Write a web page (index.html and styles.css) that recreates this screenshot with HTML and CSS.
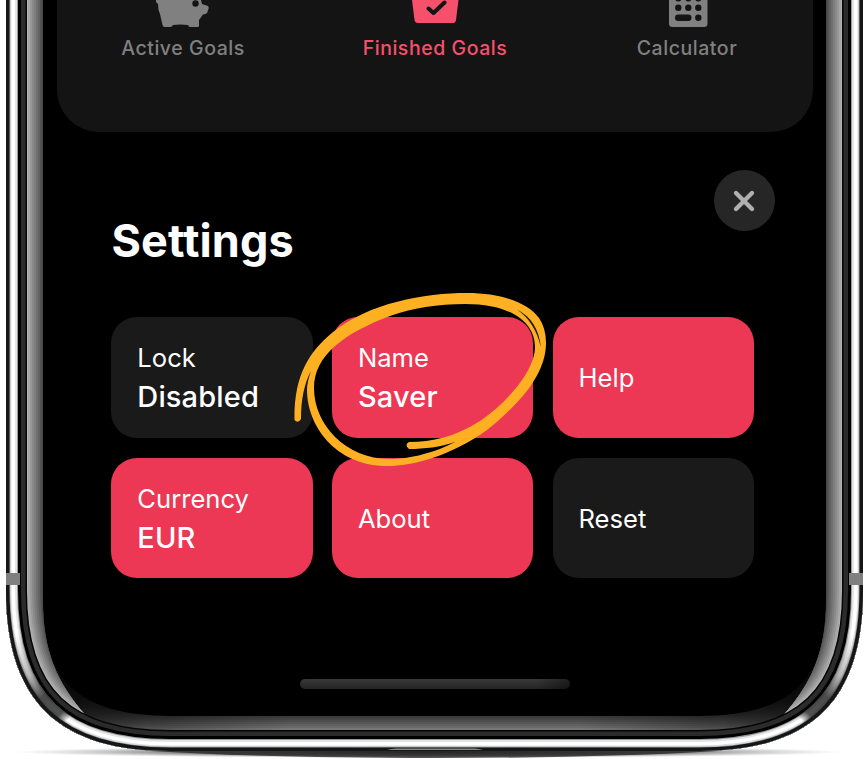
FILE: index.html
```html
<!DOCTYPE html>
<html lang="en">
<head>
<meta charset="utf-8">
<title>Settings</title>
<link rel="stylesheet" href="styles.css">
</head>
<body>
<div class="stage">
  <svg class="frame" width="868" height="759" viewBox="0 0 868 759" aria-hidden="true">
    <defs>
      <path id="body" d="M6-80V590C6 704 62 751 170 751H699C807 751 863 704 863 590V-80Z"/>
      <clipPath id="bodyClip"><use href="#body"/></clipPath>
      <clipPath id="sides"><path d="M0-80H43V600C43 650 56 682 87 717L60 759H0ZM869-80H826V600C826 650 813 682 782 717L809 759H869Z"/></clipPath>
      <linearGradient id="fade" gradientUnits="userSpaceOnUse" x1="75" x2="794" y1="0" y2="0">
        <stop offset="0" stop-opacity=".85"/><stop offset=".1" stop-opacity=".35"/><stop offset=".3" stop-opacity="0"/><stop offset=".7" stop-opacity="0"/><stop offset=".9" stop-opacity=".35"/><stop offset="1" stop-opacity=".85"/>
      </linearGradient>
      <linearGradient id="shadeL" gradientUnits="userSpaceOnUse" x1="0" y1="650" x2="69" y2="719">
        <stop offset="0" stop-color="#222" stop-opacity="0"/><stop offset=".4" stop-color="#333" stop-opacity=".35"/><stop offset=".65" stop-color="#2c2c2c" stop-opacity=".85"/><stop offset=".9" stop-color="#333" stop-opacity=".85"/><stop offset=".96" stop-color="#333" stop-opacity=".4"/><stop offset="1.0" stop-color="#333" stop-opacity="0"/>
      </linearGradient>
      <radialGradient id="shadow"><stop offset="0" stop-color="#333"/><stop offset=".6" stop-color="#555" stop-opacity=".75"/><stop offset="1" stop-color="#999" stop-opacity="0"/></radialGradient>
      <g id="corner"><path d="M6 590C6 704 62 751 170 751" fill="none" stroke="url(#shadeL)" stroke-width="24"/></g>
    </defs>
    <ellipse cx="429" cy="752" rx="415" ry="6" fill="url(#shadow)"/>
    <g clip-path="url(#bodyClip)" fill="none">
      <use href="#body" fill="#000"/>
      <g>
        <use href="#body" stroke="#3b3b3b" stroke-width="70"/>
        <use href="#body" stroke="#444" stroke-width="66"/>
        <use href="#body" stroke="#4d4d4d" stroke-width="62"/>
        <use href="#body" stroke="#565656" stroke-width="58"/>
        <use href="#body" stroke="#606060" stroke-width="54"/>
        <use href="#body" stroke="#6a6a6a" stroke-width="50"/>
        <use href="#body" stroke="#777" stroke-width="46"/>
        <rect x="30" y="560" width="809" height="175" fill="url(#fade)"/>
      </g>
      <g clip-path="url(#sides)">
        <rect y="-80" width="869" height="839" fill="#424242"/>
        <use href="#body" stroke="#484848" stroke-width="74"/>
        <use href="#body" stroke="#555" stroke-width="71"/>
        <use href="#body" stroke="#626262" stroke-width="68"/>
        <use href="#body" stroke="#707070" stroke-width="64"/>
        <use href="#body" stroke="#7d7d7d" stroke-width="60"/>
        <use href="#body" stroke="#8a8a8a" stroke-width="56"/>
        <use href="#body" stroke="#989898" stroke-width="52"/>
        <use href="#body" stroke="#a6a6a6" stroke-width="48"/>
        <use href="#body" stroke="#b4b4b4" stroke-width="44"/>
      </g>
      <use href="#body" stroke="#050505" stroke-width="42"/>
      <use href="#body" stroke="#2b2b2b" stroke-width="39"/>
      <use href="#body" stroke="#000" stroke-width="30"/>
      <use href="#body" stroke="#999" stroke-width="24"/>
      <use href="#body" stroke="#e4e4e4" stroke-width="22"/>
      <use href="#body" stroke="#fff" stroke-width="18"/>
      <use href="#body" stroke="#ddd" stroke-width="11"/>
      <use href="#body" stroke="#999" stroke-width="8.5"/>
      <use href="#corner"/>
      <use href="#corner" transform="matrix(-1 0 0 1 869 0)"/>
      <use href="#body" stroke="#141617" stroke-width="7"/>
      <path d="M6 573h14v12H6zM849 573h14v12h-14z" fill="#808080"/>
      <path d="M387 750Q391 748.5 396 748.5H474Q479 748.5 483 750Z" fill="#888"/>
    </g>
    <path d="M150 751H719Q600 758 434 758T150 751Z" fill="#222" opacity=".75"/>
  </svg>

  <main class="screen">
    <nav class="tabs">
      <div class="tab">
        <svg class="tab-icon" viewBox="0 0 60 27"><path fill="#808080" d="M5-4H46L48 4L54 6Q55 7 54.500 9L53 13Q52 14 49 14.500L45 20V26Q45 27 43.500 27H36Q34.500 27 34 25Q26 24 19 25Q18 27 16.500 27H10.500Q9 27 8.500 25L6 14Q4 10 4 4L2 2V0Z"/><circle cx="41.500" cy="3.500" r="3.200" fill="#141414"/></svg>
        <span>Active Goals</span>
      </div>
      <div class="tab tab-active">
        <svg class="tab-icon" viewBox="0 0 60 27"><path fill="#f5516c" d="M4-4H56V0L53.500 0L51 20Q50.500 23 48 23H13Q10 23 9.500 20L7 0H4Z"/><path d="M23.500 8.500L28.500 13L39.500 2.500" fill="none" stroke="#141414" stroke-width="4" stroke-linecap="round" stroke-linejoin="round"/></svg>
        <span>Finished Goals</span>
      </div>
      <div class="tab">
        <svg class="tab-icon" viewBox="0 0 60 27"><path fill="#808080" d="M12-4H50.500V23.500Q50.500 27 47 27H15.500Q12 27 12 23.500Z"/><g fill="#141414"><circle cx="21.300" cy="-1.700" r="3.200"/><circle cx="31.300" cy="-1.700" r="3.200"/><circle cx="41.300" cy="-1.700" r="3.200"/><circle cx="21.300" cy="7.700" r="3.200"/><circle cx="31.300" cy="7.700" r="3.200"/><circle cx="41.300" cy="7.700" r="3.200"/><rect x="18" y="14.600" width="16.500" height="6.400" rx="3.200"/><circle cx="41.300" cy="17.800" r="3.200"/></g></svg>
        <span>Calculator</span>
      </div>
    </nav>

    <section class="settings">
      <button class="close" aria-label="Close"><svg width="24" height="24" viewBox="0 0 24 24"><path d="M4 4L20 20M20 4L4 20" stroke="#b0b0b0" stroke-width="4.400" stroke-linecap="round"/></svg></button>
      <h1>Settings</h1>
      <div class="grid">
        <div class="card dark"><span class="label">Lock</span><span class="value">Disabled</span></div>
        <div class="card"><span class="label">Name</span><span class="value">Saver</span></div>
        <div class="card"><span class="label">Help</span></div>
        <div class="card"><span class="label">Currency</span><span class="value">EUR</span></div>
        <div class="card"><span class="label">About</span></div>
        <div class="card dark"><span class="label">Reset</span></div>
      </div>
    </section>
    <div class="home"></div>
  </main>

  <svg class="scribble" width="868" height="759" viewBox="0 0 868 759" aria-hidden="true">
    <path fill="#fdb022" fill-rule="evenodd" d="M294.500 420C294 375 309 352 333 332C369 303 424 293 467 293C502 293 528 303 539 318Q546 328 546 343C546 373 522 402 487 430C451 456 413 466 387 466C335 466 307 425 307 390Q307 382 311 371C304 384 301 400 301 419Q298 424 294.500 420ZM390 316C412 308 438 304 465 304C515 304 535 325 535 347C535 370 508 402 480 421C455 437 432 442 409 442Q404 445 409 449C425 449 440 447 455 442C430 455 405 459 390 459C345 459 314 424 314 388C314 355 345 333 390 316Z"/>
    <path d="M517 309.500Q538 320 540.800 347Q535 322 517 309.500Z" fill="#241904"/>
  </svg>
</div>
</body>
</html>
```
FILE: styles.css
```css
* { box-sizing: border-box; }
body { margin: 0; background: #fff; font-family: Inter, "Liberation Sans", sans-serif; overflow: hidden; }
.stage { position: relative; width: 868px; height: 759px; overflow: hidden; }
.frame, .scribble { position: absolute; top: 0; left: 0; pointer-events: none; }
.screen { position: relative; padding: 0 55px 0 57px; display: flex; flex-direction: column; }
.tabs { height: 131.500px; background: #141414; border-radius: 0 0 42px 42px; display: grid; grid-template-columns: repeat(3, 252px); }
.tab { display: flex; flex-direction: column; align-items: center; color: #808080; font-size: 19.500px; line-height: 24px; letter-spacing: .55px; font-weight: 500; }
.tab-icon { width: 60px; height: 27px; margin: 0 0 9px 0; }
.tab:first-child .tab-icon { margin-left: 2px; }
.tab-active { color: #f5516c; }
.settings { position: relative; padding: 83.500px 58px 0 54.500px; }
.close { position: absolute; top: 38.500px; right: 38px; width: 61px; height: 61px; border: 0; border-radius: 50%; background: #262626; display: grid; place-items: center; padding: 0; }
.close svg { margin-right: 1px; }
h1 { margin: 0 0 50px; font-size: 45px; line-height: 52px; font-weight: 700; color: #fff; letter-spacing: .1px; }
.grid { display: grid; grid-template-columns: repeat(3, 201.500px); grid-auto-rows: 120.500px; gap: 20px 19.100px; margin-left: -.2px; }
.card { background: #ec3755; color: #fff; border-radius: 26px; padding: 1.500px 0 0 26px; display: flex; flex-direction: column; justify-content: center; }
.card.dark { background: #1a1a1a; }
.label { font-size: 25.600px; line-height: 38px; }
.value { font-size: 29px; line-height: 40px; font-weight: 500; letter-spacing: .15px; }
.home { width: 270px; height: 10px; margin: 101px auto 0; border-radius: 5px; background: linear-gradient(90deg, transparent 88%, rgba(0,0,0,.45)), linear-gradient(#393939, #242424); }
```
